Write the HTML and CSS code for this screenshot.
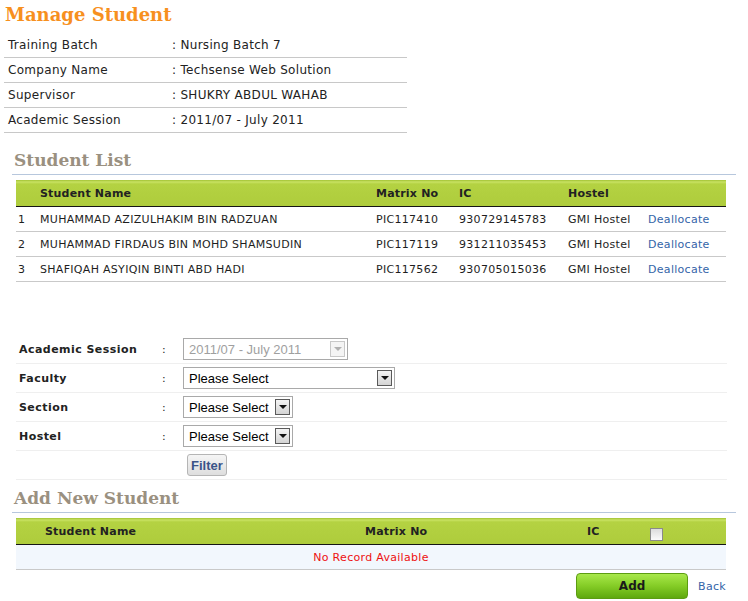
FILE: index.html
```html
<!DOCTYPE html>
<html lang="en">
<head>
    <meta charset="UTF-8">
    <title>Manage Student</title>
    <link rel="stylesheet" href="styles.css">
</head>
<body>

    <h1 class="page-title">Manage Student</h1>

    <!-- Batch details -->
    <table class="info">
        <tr><td class="info-label">Training Batch</td><td>: Nursing Batch 7</td></tr>
        <tr><td class="info-label">Company Name</td><td>: Techsense Web Solution</td></tr>
        <tr><td class="info-label">Supervisor</td><td>: SHUKRY ABDUL WAHAB</td></tr>
        <tr><td class="info-label">Academic Session</td><td>: 2011/07 - July 2011</td></tr>
    </table>

    <h2 class="section-title">Student List</h2>

    <table class="grid">
        <thead>
            <tr>
                <th class="c-no"></th>
                <th class="c-name">Student Name</th>
                <th class="c-matrix">Matrix No</th>
                <th class="c-ic">IC</th>
                <th class="c-hostel">Hostel</th>
                <th class="c-act"></th>
            </tr>
        </thead>
        <tbody>
            <tr>
                <td>1</td><td>MUHAMMAD AZIZULHAKIM BIN RADZUAN</td><td>PIC117410</td><td>930729145783</td><td>GMI Hostel</td><td><a href="#">Deallocate</a></td>
            </tr>
            <tr>
                <td>2</td><td>MUHAMMAD FIRDAUS BIN MOHD SHAMSUDIN</td><td>PIC117119</td><td>931211035453</td><td>GMI Hostel</td><td><a href="#">Deallocate</a></td>
            </tr>
            <tr>
                <td>3</td><td>SHAFIQAH ASYIQIN BINTI ABD HADI</td><td>PIC117562</td><td>930705015036</td><td>GMI Hostel</td><td><a href="#">Deallocate</a></td>
            </tr>
        </tbody>
    </table>

    <!-- Filter -->
    <table class="filter">
        <tr>
            <td class="f-label">Academic Session</td>
            <td class="f-colon">:</td>
            <td>
                <span class="dropdown disabled session">
                    <select disabled><option>2011/07 - July 2011</option></select>
                    <span class="arrow"></span>
                </span>
            </td>
        </tr>
        <tr>
            <td class="f-label">Faculty</td>
            <td class="f-colon">:</td>
            <td>
                <span class="dropdown faculty">
                    <select><option>Please Select</option></select>
                    <span class="arrow"></span>
                </span>
            </td>
        </tr>
        <tr>
            <td class="f-label">Section</td>
            <td class="f-colon">:</td>
            <td>
                <span class="dropdown">
                    <select><option>Please Select</option></select>
                    <span class="arrow"></span>
                </span>
            </td>
        </tr>
        <tr>
            <td class="f-label">Hostel</td>
            <td class="f-colon">:</td>
            <td>
                <span class="dropdown">
                    <select><option>Please Select</option></select>
                    <span class="arrow"></span>
                </span>
            </td>
        </tr>
        <tr>
            <td></td>
            <td></td>
            <td><button class="filter-btn">Filter</button></td>
        </tr>
    </table>

    <h2 class="section-title add-title">Add New Student</h2>

    <table class="grid add-grid">
        <thead>
            <tr>
                <th class="a-no"></th>
                <th class="a-name">Student Name</th>
                <th class="a-matrix">Matrix No</th>
                <th class="a-ic">IC</th>
                <th class="a-check"><input type="checkbox" class="check"></th>
            </tr>
        </thead>
        <tbody>
            <tr class="empty-row">
                <td colspan="5">No Record Available</td>
            </tr>
        </tbody>
    </table>

    <div class="actions">
        <button class="add-btn">Add</button>
        <a href="#" class="back-link">Back</a>
    </div>

</body>
</html>
```

FILE: styles.css
```css
body {
    margin: 0;
    padding: 0 4px;
    font-family: "DejaVu Sans", Verdana, sans-serif;
    font-size: 11px;
    letter-spacing: 0.3px;
    color: #222;
    background: #fff;
}

.page-title {
    margin: 0;
    padding: 4px 0 0 1px;
    height: 33px;
    box-sizing: border-box;
    font-family: "DejaVu Serif", Georgia, serif;
    font-size: 18px;
    font-weight: bold;
    letter-spacing: 0;
    color: #f7901e;
}

/* batch details */
.info {
    border-collapse: collapse;
    width: 403px;
    font-size: 12px;
    color: #222;
}
.info td {
    height: 24px;
    padding: 0 0 0 4px;
    border-bottom: 1px solid #c8c8c8;
}
.info-label {
    width: 160px;
}

.section-title {
    margin: 17px 0 5px 8px;
    padding: 0 0 4px 2px;
    width: 722px;
    border-bottom: 1px solid #b7c7dd;
    font-family: "DejaVu Serif", Georgia, serif;
    font-size: 17px;
    font-weight: bold;
    letter-spacing: 0;
    color: #9a9080;
}
.add-title {
    margin-top: 8px;
}

/* green grid */
.grid {
    border-collapse: collapse;
    width: 710px;
    margin-left: 12px;
    table-layout: fixed;
}
.grid th {
    height: 26px;
    padding: 0 2px;
    text-align: left;
    font-weight: bold;
    letter-spacing: 0.2px;
    color: #222;
    background: linear-gradient(#a2c234 0, #c9e263 2px, #b4d242 4px, #aecc3c 100%);
    border-bottom: 1px solid #151515;
}
.grid td {
    height: 24px;
    padding: 0 2px;
    border-bottom: 1px solid #c9c9c9;
    color: #1e1e1e;
}
.grid a {
    color: #3464a8;
    text-decoration: none;
}
.c-no { width: 18px; }
.c-name { width: 332px; }
.c-matrix { width: 79px; }
.c-ic { width: 105px; }
.c-hostel { width: 76px; }

/* filter form */
.filter {
    border-collapse: collapse;
    width: 711px;
    margin: 53px 0 0 12px;
}
.filter td {
    height: 28px;
    padding: 0;
    border-bottom: 1px solid #efefef;
    vertical-align: middle;
}
.f-label {
    width: 143px;
    padding-left: 3px !important;
    font-weight: bold;
    letter-spacing: 0.45px;
    color: #222;
}
.f-colon {
    width: 21px;
}
.dropdown {
    display: inline-flex;
    align-items: center;
    width: 110px;
    height: 22px;
    box-sizing: border-box;
    border: 1px solid #a9a9a9;
    background: #fff;
    vertical-align: middle;
}
.dropdown select {
    flex: 1;
    min-width: 0;
    appearance: none;
    border: none;
    background: transparent;
    padding: 0 0 0 5px;
    font-family: "Liberation Sans", Arial, sans-serif;
    font-size: 13px;
    letter-spacing: 0;
    color: #000;
}
.dropdown .arrow {
    position: relative;
    width: 15px;
    height: 16px;
    margin-right: 2px;
    box-sizing: border-box;
    border: 1px solid #5a5a5a;
    background: linear-gradient(#f4f4f4, #d4d4d4);
}
.dropdown .arrow::after {
    content: "";
    position: absolute;
    left: 3px;
    top: 5px;
    border-left: 4px solid transparent;
    border-right: 4px solid transparent;
    border-top: 4px solid #111;
}
.dropdown.faculty { width: 212px; }
.dropdown.session { width: 165px; }
.dropdown.disabled select { color: #777; }
.dropdown.disabled .arrow {
    border-color: #c8c8c8;
    background: #f4f4f4;
}
.dropdown.disabled .arrow::after { border-top-color: #b0b0b0; }

.filter-btn {
    margin-left: 4px;
    height: 22px;
    padding: 0 3px;
    border: 1px solid #b5b5b5;
    border-radius: 3px;
    background: linear-gradient(#f5f5f5, #dedede);
    font-family: "Liberation Sans", Arial, sans-serif;
    font-size: 13px;
    font-weight: bold;
    letter-spacing: 0;
    color: #3b5488;
    vertical-align: middle;
}

/* add new student */
.add-grid th { height: 26px; }
.a-no { width: 23px; }
.a-name { width: 316px; }
.a-matrix { width: 218px; }
.a-ic { width: 59px; }
.check {
    appearance: none;
    width: 13px;
    height: 13px;
    margin: 7px 0 0 0;
    border: 1px solid #8a8a8a;
    background: linear-gradient(#dcdcdc, #fafafa);
    vertical-align: middle;
}
.empty-row td {
    background: #f2f7fd;
    text-align: center;
    color: #ee1111;
}

.actions {
    width: 710px;
    margin: 3px 0 0 12px;
    display: flex;
    justify-content: flex-end;
    align-items: center;
    gap: 10px;
}
.add-btn {
    width: 112px;
    height: 26px;
    border: 1px solid #5c9c12;
    border-radius: 4px;
    background: linear-gradient(#a8e84a, #84cc26 50%, #5fa80e);
    font-family: "DejaVu Sans", Verdana, sans-serif;
    font-size: 12px;
    font-weight: bold;
    color: #1a1a1a;
}
.back-link {
    color: #3464a8;
    text-decoration: none;
    font-size: 11px;
}
```
